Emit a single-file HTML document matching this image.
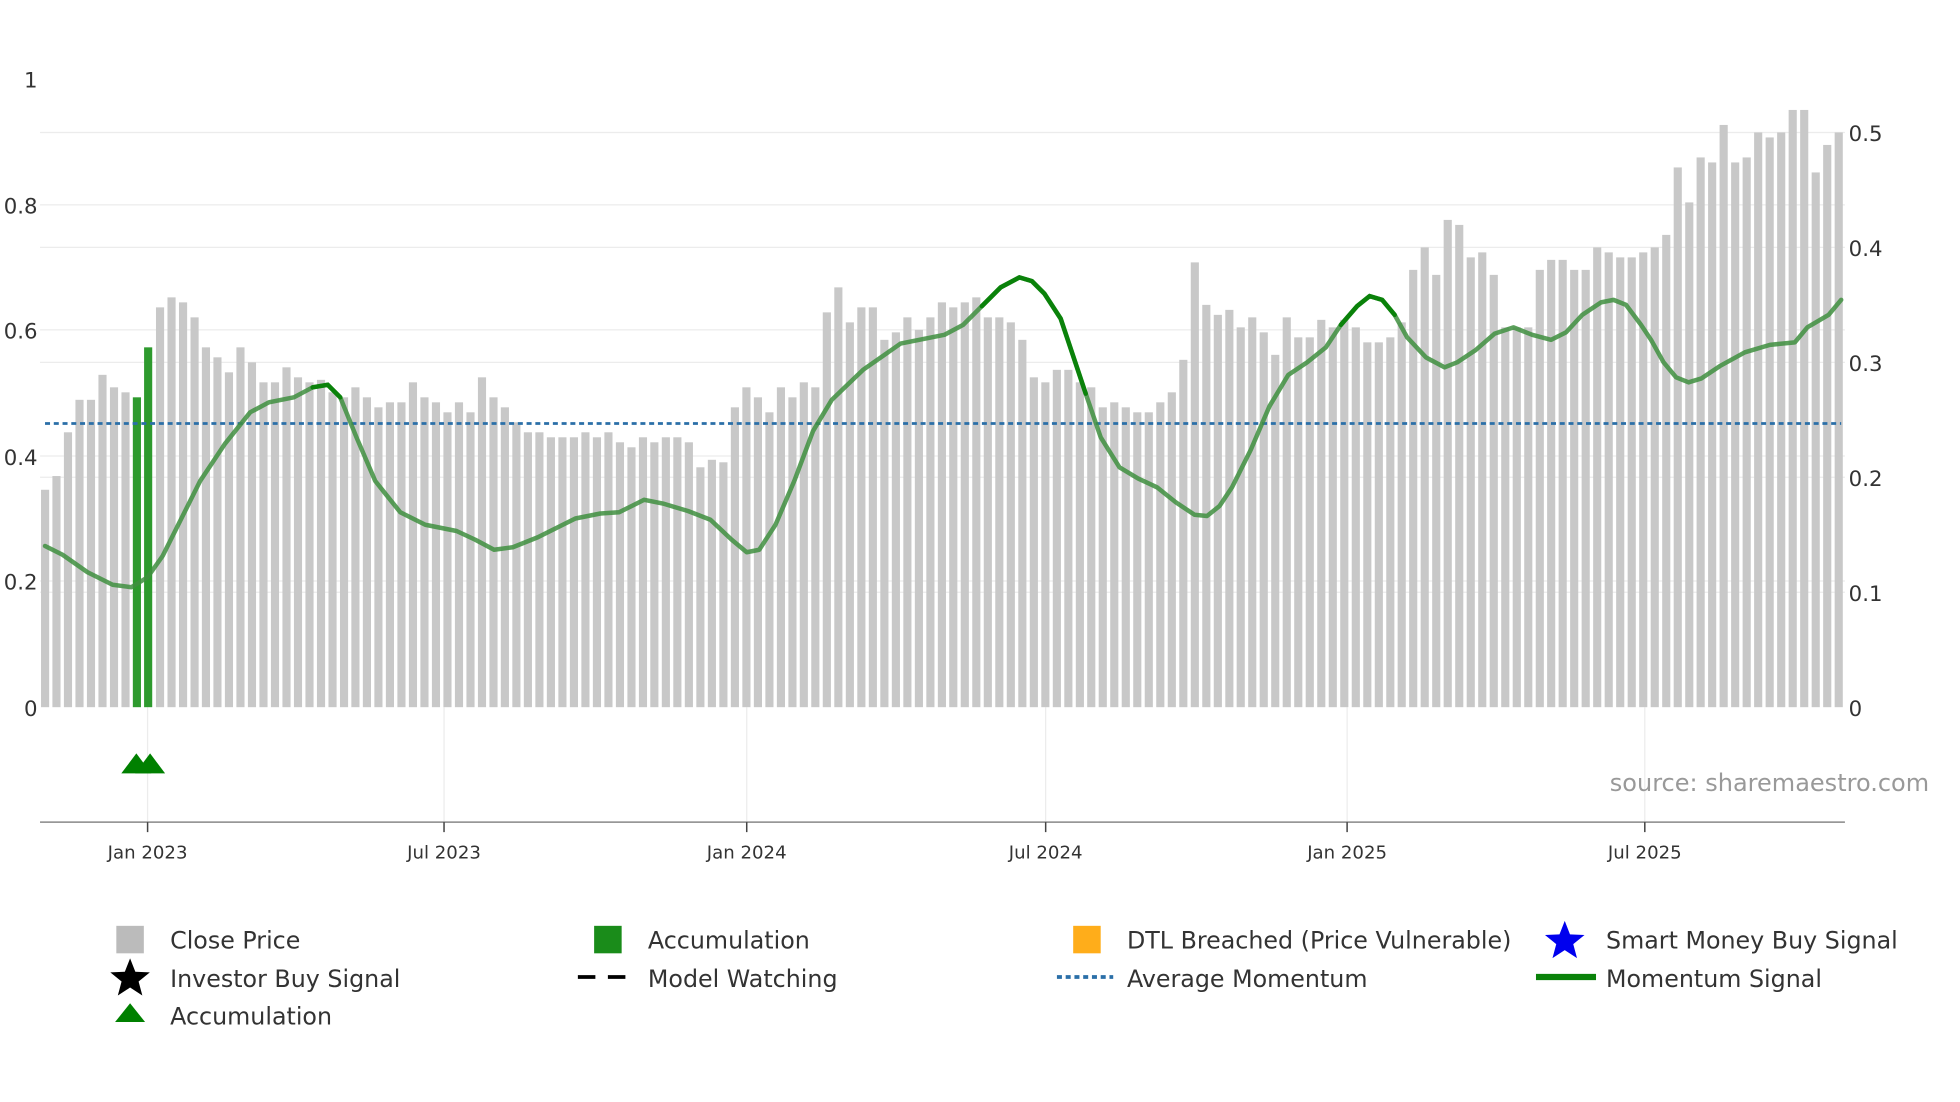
<!DOCTYPE html>
<html><head><meta charset="utf-8"><style>
html,body{margin:0;padding:0;background:#fff;}
svg{display:block;}
text{font-family:"DejaVu Sans","Liberation Sans",sans-serif;fill:#333;}
</style></head><body>
<svg width="1960" height="1102" viewBox="0 0 1567 882" preserveAspectRatio="none" xmlns="http://www.w3.org/2000/svg">
<rect width="1567" height="882" fill="#fff"/>
<g stroke="#ececec" stroke-width="1">
<line x1="32" x2="1475" y1="106" y2="106"/><line x1="32" x2="1475" y1="164" y2="164"/>
<line x1="32" x2="1475" y1="198" y2="198"/><line x1="32" x2="1475" y1="264" y2="264"/>
<line x1="32" x2="1475" y1="290" y2="290"/><line x1="32" x2="1475" y1="365" y2="365"/>
<line x1="32" x2="1475" y1="382" y2="382"/><line x1="32" x2="1475" y1="465" y2="465"/>
<line x1="32" x2="1475" y1="474" y2="474"/>
<line x1="118" x2="118" y1="566" y2="658"/><line x1="355" x2="355" y1="566" y2="658"/>
<line x1="597" x2="597" y1="566" y2="658"/><line x1="836" x2="836" y1="566" y2="658"/>
<line x1="1077" x2="1077" y1="566" y2="658"/><line x1="1315" x2="1315" y1="566" y2="658"/>
</g>
<g id="bars" fill="#c8c8c8"></g>
<g fill="#2e9a2e">
<rect x="106.2" y="318" width="6.5" height="248"/>
<rect x="115.2" y="278" width="6.5" height="288"/>
</g>
<line x1="36" x2="1472" y1="339" y2="339" stroke="#2a6fa8" stroke-width="2.2" stroke-dasharray="4,3"/>
<path id="mom" fill="none" stroke="#3f8f3f" stroke-opacity="0.85" stroke-width="3.6" stroke-linejoin="round" stroke-linecap="round" d=""/>
<path id="momA" fill="none" stroke="#0a820a" stroke-width="3.6" stroke-linecap="round" d=""/>
<path id="momB" fill="none" stroke="#0a820a" stroke-width="3.6" stroke-linecap="round" d=""/>
<path id="momC" fill="none" stroke="#0a820a" stroke-width="3.6" stroke-linecap="round" d=""/>
<g font-size="17" text-anchor="end">
<text x="30" y="70">1</text><text x="30" y="171">0.8</text><text x="30" y="271">0.6</text>
<text x="30" y="372">0.4</text><text x="30" y="472">0.2</text><text x="30" y="573">0</text>
</g>
<g font-size="17">
<text x="1478" y="113">0.5</text><text x="1478" y="205">0.4</text><text x="1478" y="297">0.3</text>
<text x="1478" y="389">0.2</text><text x="1478" y="481">0.1</text><text x="1478" y="573">0</text>
</g>
<polygon points="97,619 109,603 121,619" fill="#008000"/>
<polygon points="108,619 120,603 132,619" fill="#008000"/>
<line x1="32" x2="1475" y1="658" y2="658" stroke="#888" stroke-width="1.2"/>
<g stroke="#444" stroke-width="1.2">
<line x1="118" x2="118" y1="658" y2="666"/><line x1="355" x2="355" y1="658" y2="666"/>
<line x1="597" x2="597" y1="658" y2="666"/><line x1="836" x2="836" y1="658" y2="666"/>
<line x1="1077" x2="1077" y1="658" y2="666"/><line x1="1315" x2="1315" y1="658" y2="666"/>
</g>
<g font-size="14.5" text-anchor="middle">
<text x="118" y="687">Jan 2023</text><text x="355" y="687">Jul 2023</text>
<text x="597" y="687">Jan 2024</text><text x="836" y="687">Jul 2024</text>
<text x="1077" y="687">Jan 2025</text><text x="1315" y="687">Jul 2025</text>
</g>
<text x="1287" y="633" font-size="19.2" style="fill:#999">source: sharemaestro.com</text>
<g font-size="19">
<rect x="93" y="741" width="22" height="22" fill="#bbb"/><text x="136" y="759">Close Price</text>
<rect x="475" y="741" width="22" height="22" fill="#1a8c1a"/><text x="518" y="759">Accumulation</text>
<rect x="858" y="741" width="22" height="22" fill="#ffad1a"/><text x="901" y="759">DTL Breached (Price Vulnerable)</text>
<polygon points="1251,737 1255.2,747.8 1266.8,748.3 1257.8,755.6 1260.8,766.8 1251,760.4 1241.2,766.8 1244.2,755.6 1235.2,748.3 1246.8,747.8" fill="#0000ee"/>
<text x="1284" y="759">Smart Money Buy Signal</text>
<polygon points="104,767 108.2,777.8 119.8,778.3 110.8,785.6 113.8,796.8 104,790.4 94.2,796.8 97.2,785.6 88.2,778.3 99.8,777.8" fill="#000"/>
<text x="136" y="790">Investor Buy Signal</text>
<line x1="462" x2="508" y1="782" y2="782" stroke="#000" stroke-width="3" stroke-dasharray="14,10"/>
<text x="518" y="790">Model Watching</text>
<line x1="845" x2="890" y1="782" y2="782" stroke="#2a6fa8" stroke-width="3" stroke-dasharray="4,3"/>
<text x="901" y="790">Average Momentum</text>
<line x1="1228" x2="1276" y1="782" y2="782" stroke="#0a820a" stroke-width="5"/>
<text x="1284" y="790">Momentum Signal</text>
<polygon points="92,818 104,803 116,818" fill="#008000"/>
<text x="136" y="820">Accumulation</text>
</g>
</svg>
<script>
var tops=[392,381,346,320,320,300,310,314,318,278,246,238,242,254,278,286,298,278,290,306,306,294,302,306,304,314,318,310,318,326,322,322,306,318,322,330,322,330,302,318,326,338,346,346,350,350,350,346,350,346,354,358,350,354,350,350,354,374,368,370,326,310,318,330,310,318,306,310,250,230,258,246,246,272,266,254,264,254,242,246,242,238,254,254,258,272,302,306,296,296,306,310,326,322,326,330,330,322,314,288,210,244,252,248,262,254,266,284,254,270,270,256,262,256,262,274,274,270,258,216,198,220,176,180,206,202,220,262,262,262,216,208,208,216,216,198,202,206,206,202,198,188,134,162,126,130,100,130,126,106,110,106,88,88,138,116,106];
var n=tops.length,g=document.getElementById('bars'),s='';
var step=(1470-36)/(n-1);
for(var i=0;i<n;i++){if(i==8||i==9)continue;var x=36+i*step-3.25;s+='<rect x="'+x.toFixed(1)+'" y="'+tops[i]+'" width="6.5" height="'+(566-tops[i])+'"/>';}
g.innerHTML=s;
var p=[[36,437],[50,444],[70,458],[90,468],[105,470],[118,462],[130,445],[145,415],[160,385],[180,355],[200,330],[215,322],[235,318],[250,310],[262,308],[272,318],[285,350],[300,385],[320,410],[340,420],[365,425],[380,432],[395,440],[410,438],[430,430],[460,415],[480,411],[495,410],[515,400],[530,403],[550,409],[568,416],[585,432],[597,442],[607,440],[620,420],[635,385],[650,345],[665,320],[690,296],[720,275],[755,268],[770,260],[785,245],[800,230],[815,222],[825,225],[835,235],[848,255],[858,285],[868,315],[880,350],[895,374],[910,383],[925,390],[940,402],[955,412],[965,413],[975,405],[985,390],[1000,360],[1015,325],[1030,300],[1045,290],[1060,278],[1072,260],[1085,245],[1095,237],[1105,240],[1115,252],[1125,270],[1140,286],[1155,294],[1165,290],[1180,280],[1195,267],[1210,262],[1225,268],[1240,272],[1252,266],[1265,252],[1280,242],[1290,240],[1300,244],[1312,260],[1320,272],[1330,290],[1340,302],[1350,306],[1360,303],[1375,293],[1395,282],[1415,276],[1435,274],[1445,262],[1462,252],[1472,240]];
function path(a,b){var d='';for(var i=0;i<p.length;i++){var x=p[i][0];if(x<a||x>b)continue;d+=(d?'L':'M')+x+','+p[i][1];}return d;}
document.getElementById('mom').setAttribute('d',path(0,2000));
document.getElementById('momA').setAttribute('d',path(250,272));
document.getElementById('momB').setAttribute('d',path(785,868));
document.getElementById('momC').setAttribute('d',path(1072,1115));
</script>
</body></html>
